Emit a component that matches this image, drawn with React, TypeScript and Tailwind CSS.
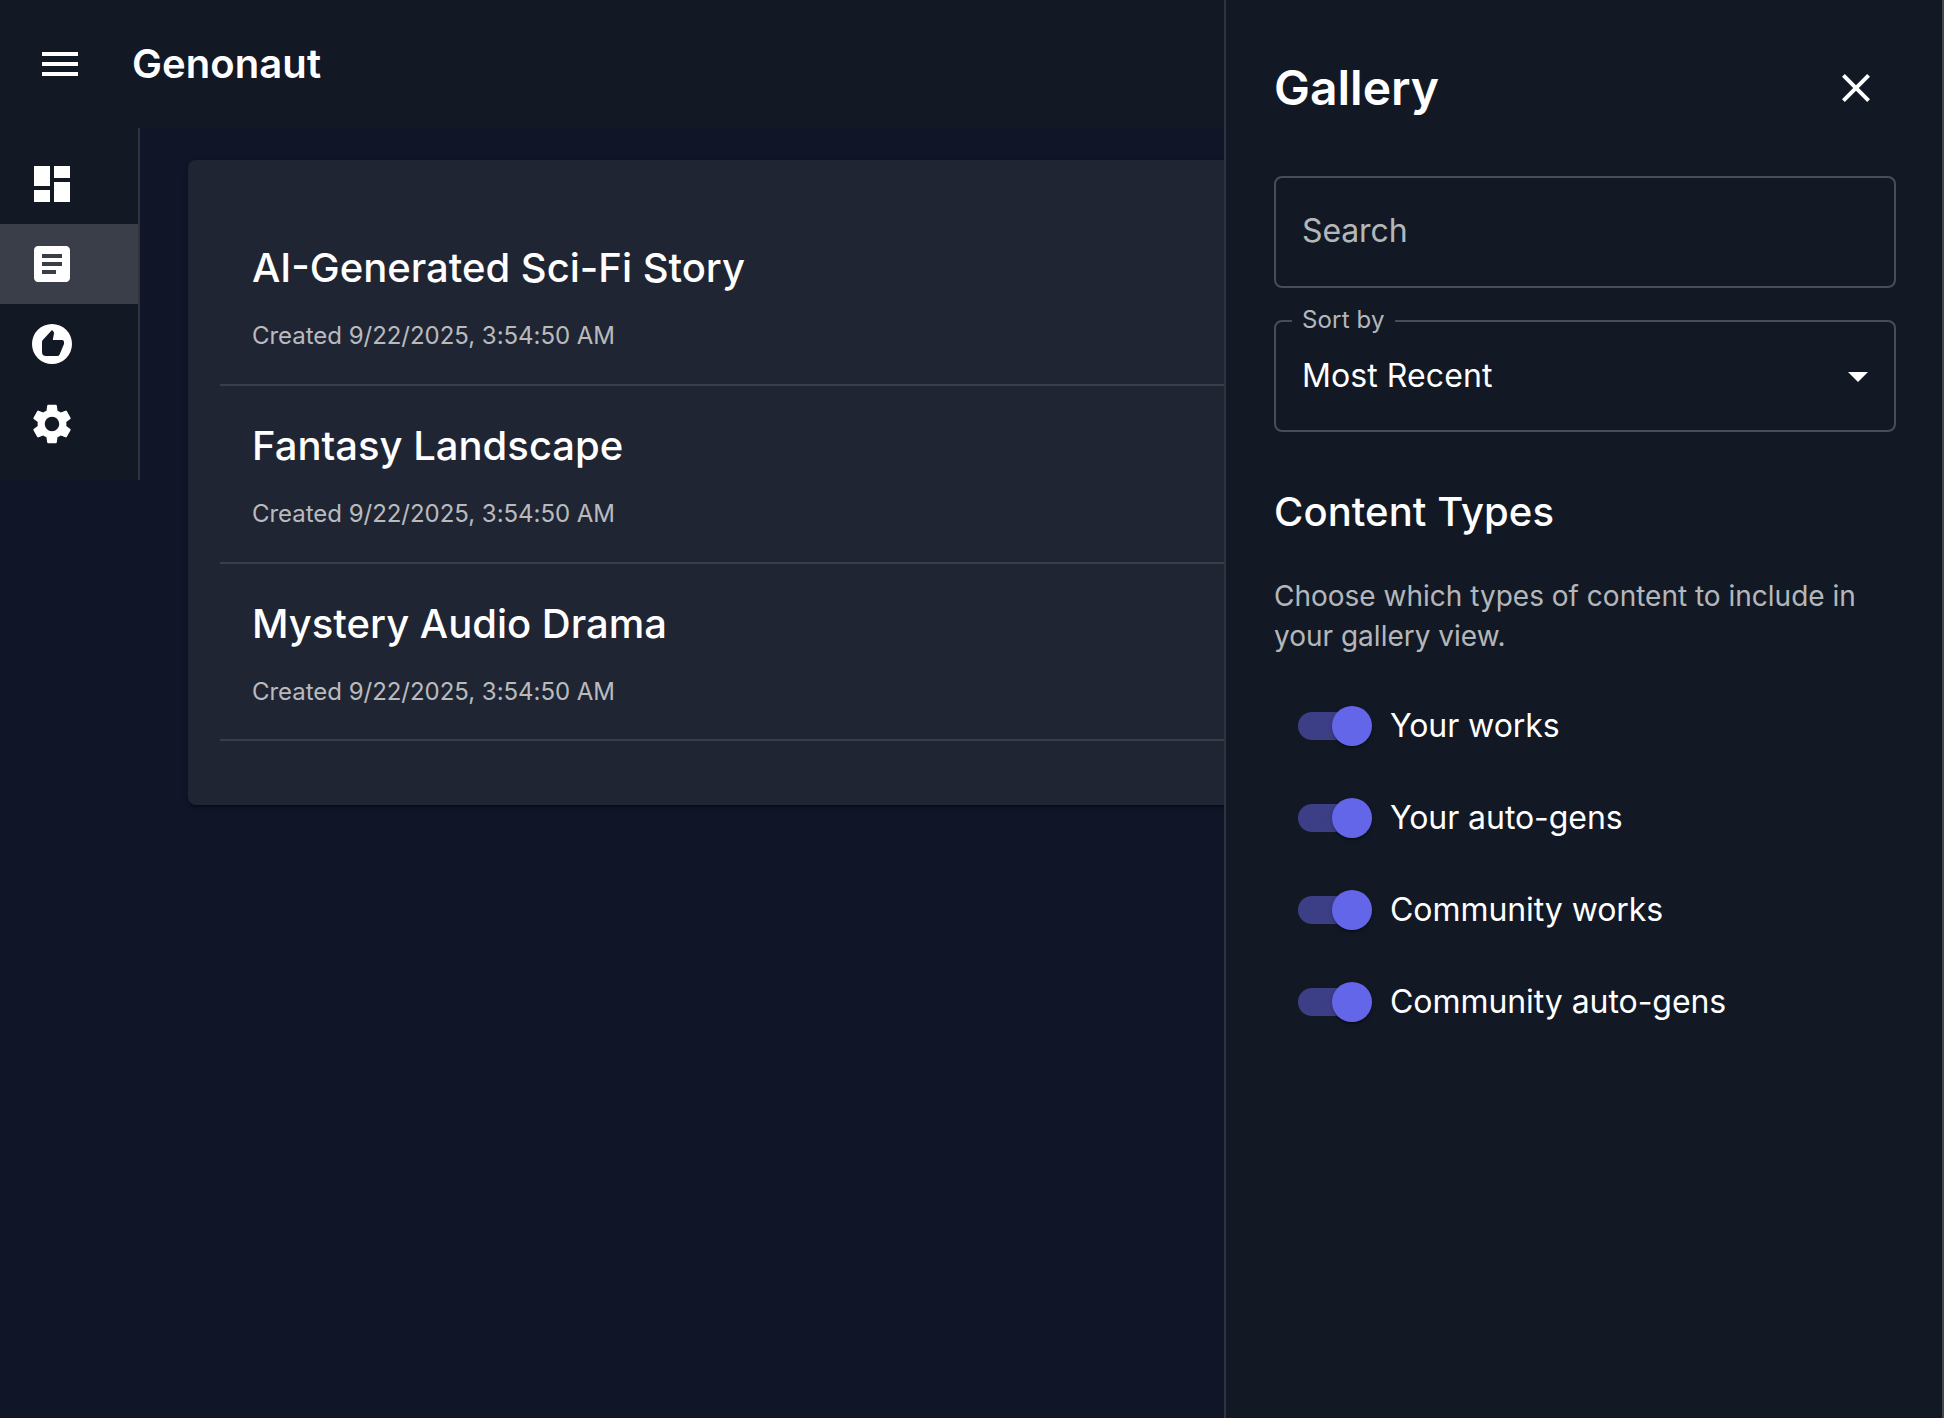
import { useState } from "react";
import {
  MdArrowDropDown,
  MdArticle,
  MdClose,
  MdDashboard,
  MdMenu,
  MdRecommend,
  MdSettings,
} from "react-icons/md";

const navItems = [
  { name: "Dashboard", Icon: MdDashboard, active: false },
  { name: "Gallery", Icon: MdArticle, active: true },
  { name: "Recommendations", Icon: MdRecommend, active: false },
  { name: "Settings", Icon: MdSettings, active: false },
];

const works = ["AI-Generated Sci-Fi Story", "Fantasy Landscape", "Mystery Audio Drama"];

const contentTypes = ["Your works", "Your auto-gens", "Community works", "Community auto-gens"];

function Toggle({ label }: { label: string }) {
  const [on, setOn] = useState(true);
  return (
    <div className="flex h-[76px] items-center">
      <button
        role="switch"
        aria-checked={on}
        aria-label={label}
        onClick={() => setOn(!on)}
        className="mx-6 flex h-7 w-[68px] shrink-0 items-center rounded-full bg-[#3c3f86]"
      >
        <span
          className={
            on
              ? "ml-[34px] size-10 shrink-0 rounded-full bg-[#6466e9] shadow-[0_4px_2px_-2px_rgba(0,0,0,0.2),0_2px_2px_rgba(0,0,0,0.14),0_2px_6px_rgba(0,0,0,0.12)]"
              : "-ml-1.5 size-10 shrink-0 rounded-full bg-gray-300"
          }
        />
      </button>
      <span className="text-[32px] leading-[48px] tracking-[-0.06px] whitespace-nowrap">{label}</span>
    </div>
  );
}

export default function App() {
  return (
    <div className="flex h-[1418px] w-[1944px] overflow-hidden bg-[#101628] font-['Inter',sans-serif] text-white antialiased">
      <div className="flex w-[1224px] shrink-0 flex-col overflow-hidden">
        <header className="flex h-32 shrink-0 items-center bg-[#121925] pl-9">
          <MdMenu className="size-12" />
          <h1 className="ml-12 text-[40px] leading-[64px] font-semibold tracking-[0.08px]">Genonaut</h1>
        </header>
        <div className="flex items-start">
          <nav className="w-[140px] shrink-0 border-r-2 border-[#2f3340] bg-[#121925] py-4">
            {navItems.map(({ name, Icon, active }) => (
              <a
                key={name}
                aria-label={name}
                className={
                  active
                    ? "flex h-20 items-center bg-[#3a3e49] pl-7"
                    : "flex h-20 items-center pl-7"
                }
              >
                <Icon className="size-12" />
              </a>
            ))}
          </nav>
          <main className="mt-8 ml-12 w-[1100px] shrink-0 rounded-lg bg-[#1f2532] px-8 pt-12 pb-16 shadow-[0_4px_2px_-2px_rgba(0,0,0,0.2),0_2px_2px_rgba(0,0,0,0.14),0_2px_6px_rgba(0,0,0,0.12)]">
            {works.map((title) => (
              <article key={title} className="border-b-2 border-[#3a3e4b] px-8 py-7">
                <h2 className="text-[40px] leading-[64px] font-medium">{title}</h2>
                <p className="mt-4 text-2xl leading-[39.78px] tracking-[-0.03px] text-white/70">
                  Created 9/22/2025, 3:54:50 AM
                </p>
              </article>
            ))}
          </main>
        </div>
      </div>

      <aside className="flex w-[720px] shrink-0 flex-col border-r-2 border-l-2 border-r-[#45444f] border-l-[#2f3340] bg-[#121925] pt-12 pr-[46px] pl-12">
        <div className="flex h-20 items-center justify-between">
          <h2 className="text-5xl leading-[64px] font-semibold">Gallery</h2>
          <button aria-label="Close" className="p-4">
            <MdClose className="size-12" />
          </button>
        </div>

        <div className="mt-12 h-28 rounded-lg border-2 border-white/23 px-[26px] pt-[30px] text-[32px] leading-[46px] tracking-[-0.12px] text-white/70">
          Search
        </div>

        <div className="relative mt-8 flex h-28 items-center justify-between rounded-lg border-2 border-white/23 pr-3 pl-[26px]">
          <span className="absolute -top-[19px] left-4 bg-[#121925] px-2.5 text-2xl leading-[34.5px] tracking-[0.15px] text-white/70">
            Sort by
          </span>
          <span className="text-[32px] leading-[46px] tracking-[0.08px]">Most Recent</span>
          <MdArrowDropDown className="size-12" />
        </div>

        <h3 className="mt-12 text-[40px] leading-[64px] font-medium tracking-[0.08px]">Content Types</h3>
        <p className="mt-8 text-[28px] leading-10 text-white/70">
          Choose which types of content to include in your gallery view.
        </p>
        <div className="mt-8 flex flex-col gap-4">
          {contentTypes.map((label) => (
            <Toggle key={label} label={label} />
          ))}
        </div>
      </aside>
    </div>
  );
}
